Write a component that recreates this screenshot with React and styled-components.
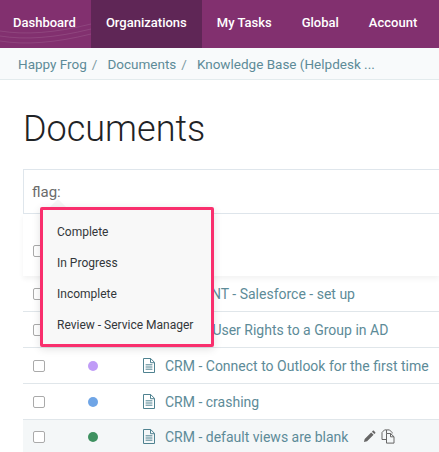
import React from 'react';
import styled, { createGlobalStyle } from 'styled-components';

const Global = createGlobalStyle`
html, body {
  margin: 0;
  padding: 0;
  background: #fff;
  overflow: hidden;
}
body {
  font-family: Roboto, "Liberation Sans", sans-serif;
}
`

const Page = styled.div`
width: 439px;
height: 452px;
overflow: hidden;
position: relative;
`

const Nav = styled.nav`
position: relative;
display: flex;
height: 48px;
background: #82306f;
overflow: hidden;
`

const Waves = styled.svg`
position: absolute;
left: 0;
top: 0;
`

const NavItem = styled.a`
position: relative;
display: flex;
align-items: center;
box-sizing: border-box;
height: 48px;
padding: 0 15px 4px;
font-size: 13px;
font-weight: 500;
color: #fff;
white-space: nowrap;
background: ${p => p.$active ? '#5f2656' : 'transparent'};
&:first-of-type {
  padding-left: 13px;
}
`

const Crumbs = styled.div`
display: flex;
align-items: center;
height: 31px;
padding-left: 18px;
background: #f8fafb;
border-bottom: 1px solid #e3ebed;
font-size: 13.5px;
color: #5d8b98;
`

const Sep = styled.span`
margin: 0 10px 0 5px;
color: #7d9aa3;
`

const Content = styled.div`
padding: 0 0 0 23px;
`

const Title = styled.h1`
margin: 0;
padding-top: 24px;
height: 65px;
font-size: 36px;
line-height: 50px;
font-weight: 300;
color: #1f2326;
`

const SearchBox = styled.div`
display: flex;
align-items: center;
height: 42px;
padding: 1px 0 0 8px;
margin-right: -4px;
border: 1px solid #dfe6ec;
font-size: 15px;
color: #6b6b6b;
`

const HeaderRow = styled.div`
display: flex;
align-items: center;
height: 62px;
padding-top: 12px;
box-sizing: border-box;
box-shadow: 0 3px 5px rgba(0,0,0,0.05);
position: relative;
`

const Row = styled.div`
display: flex;
align-items: center;
height: 35px;
border-bottom: 1px solid #e0e6ea;
background: ${p => p.$shaded ? '#f4f7f8' : '#fff'};
`

const LastRow = styled(Row)`
height: 33px;
border-bottom: 0;
`

const Check = styled.span`
flex: none;
width: 10px;
height: 10px;
margin-left: 10px;
border: 1px solid #aaa;
border-radius: 2px;
background: #fff;
`

const Dot = styled.span`
flex: none;
width: 10px;
height: 10px;
margin-left: 43px;
border-radius: 50%;
background: ${p => p.$color};
`

const DocIcon = styled.svg`
flex: none;
margin-left: 45px;
`

const RowLink = styled.span`
margin-left: 10px;
font-size: 14px;
color: #5d8b98;
white-space: nowrap;
`

const Actions = styled.span`
display: flex;
align-items: center;
gap: 5px;
margin-left: 15px;
`

const Popover = styled.div`
position: absolute;
left: 40px;
top: 207px;
width: 168px;
height: 128px;
padding: 6px 0 0;
background: #f8f8f8;
border: 3px solid #f92f6d;
border-radius: 2px;
box-shadow: 0 2px 8px rgba(0,0,0,0.12);
`

const PopoverArrow = styled.span`
position: absolute;
left: 50px;
top: 199px;
width: 0;
height: 0;
border-left: 8px solid transparent;
border-right: 8px solid transparent;
border-bottom: 8px solid #f6f6f6;
`

const PopoverItem = styled.div`
display: flex;
align-items: center;
height: 31px;
padding-left: 14px;
font-size: 12px;
color: #33373a;
white-space: nowrap;
`

const navItems = ['Dashboard', 'Organizations', 'My Tasks', 'Global', 'Account']
const flags = ['Complete', 'In Progress', 'Incomplete', 'Review - Service Manager']

const rows = [
  { color: '#7aa7e0', text: 'ACCOUNT - Salesforce - set up' },
  { color: '#3e9160', text: 'Adding User Rights to a Group in AD' },
  { color: '#c09cf7', text: 'CRM - Connect to Outlook for the first time' },
  { color: '#6fa5e6', text: 'CRM - crashing' },
]

const FileGlyph = () => (
  <DocIcon width="12" height="15" viewBox="0 0 12 15" fill="none" stroke="#4f8290" strokeWidth="1">
    <path d="M.5.5h7.2L11.5 4.4V14.5H.5z" />
    <path d="M7.5.5v4.2h4" />
    <path d="M2.6 6.8h6.8M2.6 9h6.8M2.6 11.2h6.8" />
  </DocIcon>
)

export default function App() {
  return (
    <Page>
      <Global />
      <Nav>
        <Waves width="91" height="48" viewBox="0 0 91 48" fill="none" stroke="#ffffff" strokeOpacity="0.1">
          <path d="M0 31C25 35 55 33 91 24" />
          <path d="M0 36C25 40 55 38 91 29" />
          <path d="M0 41C25 45 55 43 91 34" />
        </Waves>
        {navItems.map(n => <NavItem key={n} $active={n === 'Organizations'}>{n}</NavItem>)}
      </Nav>
      <Crumbs>
        Happy Frog<Sep>/</Sep>Documents<Sep>/</Sep>Knowledge Base (Helpdesk ...
      </Crumbs>
      <Content>
        <Title>Documents</Title>
        <SearchBox>flag:</SearchBox>
        <HeaderRow><Check /></HeaderRow>
        {rows.map(r => (
          <Row key={r.text}>
            <Check />
            <Dot $color={r.color} />
            <FileGlyph />
            <RowLink>{r.text}</RowLink>
          </Row>
        ))}
        <LastRow $shaded>
          <Check />
          <Dot $color="#3e9160" />
          <FileGlyph />
          <RowLink>CRM - default views are blank</RowLink>
          <Actions>
            <svg width="13" height="13" viewBox="0 0 14 14" fill="#666">
              <path d="M1 13l.8-3.4 7-7 2.6 2.6-7 7zM9.6 1.8l1-1c.3-.3.8-.3 1.1 0l1.5 1.5c.3.3.3.8 0 1.1l-1 1z" />
            </svg>
            <svg width="15" height="15" viewBox="0 0 15 15" fill="none" stroke="#666">
              <path d="M5.5 4.5V.9h3l2.6 2.6v1" />
              <path d="M5.5 10.5H1V3.5l2.5-2.6h2" />
              <path d="M5.5 4.5h4l3.5 3.2v6.4H5.5z" />
              <path d="M9.5 4.5v3.3H13" />
            </svg>
          </Actions>
        </LastRow>
      </Content>
      <PopoverArrow />
      <Popover>
        {flags.map(f => <PopoverItem key={f}>{f}</PopoverItem>)}
      </Popover>
    </Page>
  )
}
